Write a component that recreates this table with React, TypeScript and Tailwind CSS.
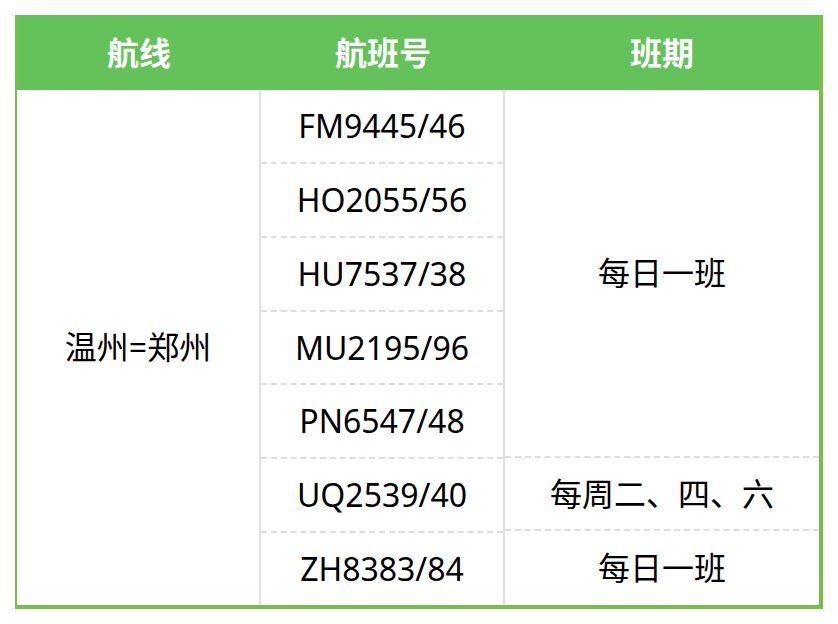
const flights = [
  "FM9445/46",
  "HO2055/56",
  "HU7537/38",
  "MU2195/96",
  "PN6547/48",
  "UQ2539/40",
  "ZH8383/84",
];

function App() {
  return (
    <div className="min-h-screen bg-white p-[15px] font-['Noto_Sans','Noto_Sans_CJK_SC',sans-serif] text-[32px] text-black">
      <div className="w-[808px] border-b-4 border-l-2 border-r-4 border-[#79bf45]">
        <div className="grid h-[75px] grid-cols-[244px_244px_1fr] items-center bg-[#63c25a] font-bold text-white">
          <div className="text-center">航线</div>
          <div className="text-center">航班号</div>
          <div className="text-center">班期</div>
        </div>
        <div className="grid h-[515px] grid-cols-[244px_244px_1fr] grid-rows-[repeat(7,1fr)]">
          <div className="col-start-1 row-span-7 row-start-1 flex items-center justify-center border-r-2 border-[#e2e2e2]">
            温州=郑州
          </div>
          <div className="col-start-2 row-span-7 row-start-1 flex flex-col border-r-2 border-[#e2e2e2]">
            {flights.map((f, i) => (
              <div
                key={f}
                className={
                  "flex flex-1 items-center justify-center " +
                  (i < flights.length - 1 ? "border-b-2 border-dashed border-[#dedede]" : "")
                }
              >
                {f}
              </div>
            ))}
          </div>
          <div className="col-start-3 row-span-5 row-start-1 flex items-center justify-center border-b-2 border-dashed border-[#dedede]">
            每日一班
          </div>
          <div className="col-start-3 row-start-6 flex items-center justify-center border-b-2 border-dashed border-[#dedede]">
            每周二、四、六
          </div>
          <div className="col-start-3 row-start-7 flex items-center justify-center">
            每日一班
          </div>
        </div>
      </div>
    </div>
  );
}

export default App;
